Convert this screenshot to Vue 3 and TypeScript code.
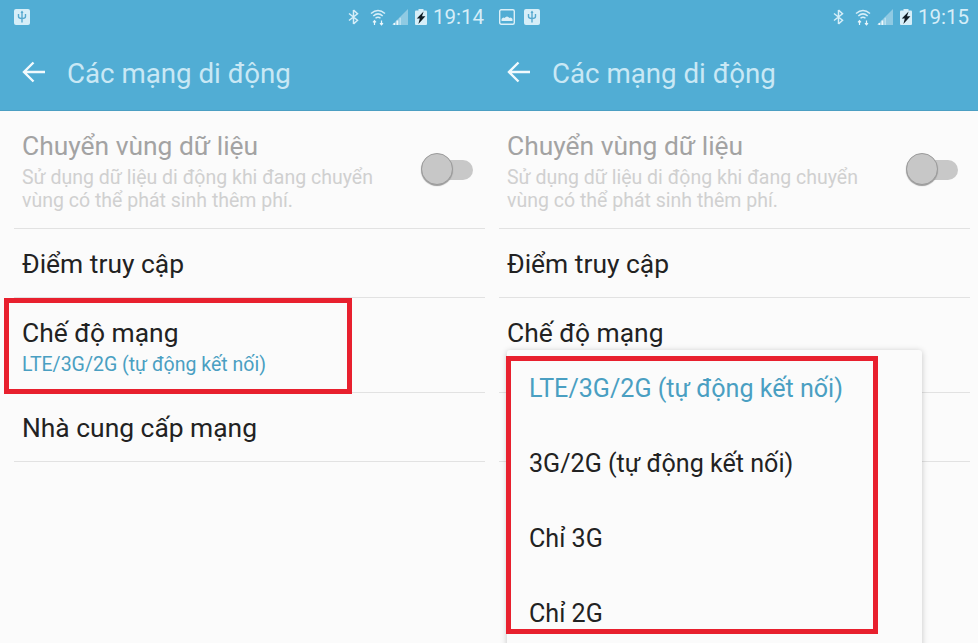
<script setup lang="ts">
interface Screen {
  time: string
  picture: boolean
  open: boolean
}

const screens: Screen[] = [
  { time: '19:14', picture: false, open: false },
  { time: '19:15', picture: true, open: true },
]

const options: string[] = ['LTE/3G/2G (tự động kết nối)', '3G/2G (tự động kết nối)', 'Chỉ 3G', 'Chỉ 2G']
</script>

<template>
  <div class="page">
    <section v-for="s in screens" :key="s.time" class="screen" :class="{ wide: s.open }">
      <header class="appbar">
        <div class="status">
          <svg v-if="s.picture" class="notif" viewBox="0 0 16 16">
            <rect x="0.7" y="0.7" width="14.6" height="14.6" rx="1.5" fill="#51add4" stroke="#dcf0f8" stroke-width="1.4" />
            <path d="M2.5 12 L2.5 10 Q4 7.5 5.5 9 Q8 6 10.5 9 Q12 7.5 13.5 10 L13.5 12 Z" fill="#dcf0f8" />
          </svg>
          <svg class="notif" viewBox="0 0 16 16">
            <rect width="16" height="16" rx="2" fill="#d6eef8" />
            <path d="M8 2.5 V13.5 M4.5 5 V7.5 Q4.5 9.5 8 9.5 Q11.5 9.5 11.5 7.5 V5" fill="none" stroke="#57a9cf" stroke-width="1.4" />
            <path d="M8 1.5 L9.5 4 H6.5 Z" fill="#57a9cf" />
          </svg>
          <span class="spacer"></span>
          <svg class="bt" viewBox="0 0 13 16">
            <path d="M6.5 1 V15 M6.5 1 L10.5 4.8 L2 11.5 M6.5 15 L10.5 11.2 L2 4.5" fill="none" stroke="#d6eef8" stroke-width="1.5" />
          </svg>
          <svg class="wifi" viewBox="0 0 16 18">
            <path d="M1 5.5 Q8 -0.5 15 5.5 M3.3 8 Q8 3.8 12.7 8 M5.5 10.3 Q8 8.2 10.5 10.3" fill="none" stroke="#d6eef8" stroke-width="1.5" />
            <path d="M4.5 17 V13 M3 14.3 L4.5 12.6 L6 14.3 M11.5 12.5 V16.5 M10 15.2 L11.5 16.9 L13 15.2" fill="none" stroke="#e9f6fb" stroke-width="1.2" />
          </svg>
          <svg class="signal" viewBox="0 0 16 16">
            <path d="M16 0 V16 H0 Z" fill="#8fcae3" />
            <path d="M1.5 16 V14 H3.2 V16 Z M4.5 16 V11.5 H6.3 V16 Z" fill="#eef8fc" />
            <path d="M7.5 16 V8.8 H9 V16 Z" fill="#b9dfef" />
          </svg>
          <svg class="battery" viewBox="0 0 12 16">
            <rect x="3.5" y="0" width="5" height="2" fill="#d6eef8" />
            <rect x="0" y="1.5" width="12" height="14.5" rx="1" fill="#d6eef8" />
            <path d="M8.6 2.6 L1.8 9.6 H4.8 L3.4 15 L10.4 7.2 H7 Z" fill="#0f1c24" />
          </svg>
          <span class="time">{{ s.time }}</span>
        </div>
        <div class="titlebar">
          <svg class="back" viewBox="0 0 24 22">
            <path d="M23 11 H2.5 M11.5 1.5 L2 11 L11.5 20.5" fill="none" stroke="#f2fafd" stroke-width="2.4" />
          </svg>
          <h1 class="heading">Các mạng di động</h1>
        </div>
      </header>

      <main class="list">
        <div class="row roaming">
          <div class="text">
            <div class="title disabled">Chuyển vùng dữ liệu</div>
            <div class="desc">Sử dụng dữ liệu di động khi đang chuyển<br />vùng có thể phát sinh thêm phí.</div>
          </div>
          <div class="toggle"><span class="thumb"></span></div>
        </div>
        <div class="row single"><div class="title">Điểm truy cập</div></div>
        <div class="row mode">
          <div class="title">Chế độ mạng</div>
          <div class="value">LTE/3G/2G (tự động kết nối)</div>
        </div>
        <div class="row single"><div class="title">Nhà cung cấp mạng</div></div>
      </main>

      <div v-if="s.open" class="menu">
        <div v-for="(o, i) in options" :key="o" class="option" :class="{ selected: i === 0 }">{{ o }}</div>
      </div>
      <div class="mark" :class="s.open ? 'mark-menu' : 'mark-row'"></div>
    </section>
  </div>
</template>

<style scoped>
.page {
  display: flex;
  width: 978px;
  height: 643px;
  overflow: hidden;
  background: #fbfbfb;
  font-family: Roboto, "Liberation Sans", sans-serif;
}
.screen {
  position: relative;
  flex: 0 0 485px;
  width: 485px;
  height: 643px;
}
.screen.wide {
  flex: 0 0 493px;
  width: 493px;
  padding-right: 8px;
  box-sizing: border-box;
}
.appbar {
  height: 111px;
  box-sizing: border-box;
  background: #51add4;
  border-bottom: 1px solid #4b9fc3;
}
.screen.wide .appbar {
  margin-right: -8px;
  padding-right: 8px;
}
.status {
  display: flex;
  align-items: center;
  height: 34px;
  padding-left: 14px;
}
.notif {
  width: 16px;
  height: 16px;
  margin-right: 9px;
}
.spacer {
  flex: 1;
}
.bt {
  width: 13px;
  height: 16px;
  margin-right: 10px;
}
.wifi {
  width: 16px;
  height: 18px;
  margin-right: 6px;
}
.signal {
  width: 16px;
  height: 16px;
  margin-right: 7px;
}
.battery {
  width: 12px;
  height: 16px;
  margin-right: 6px;
}
.time {
  font-size: 20.5px;
  line-height: 24px;
  color: #d6eef8;
  width: 52px;
  white-space: nowrap;
}
.titlebar {
  display: flex;
  align-items: center;
  height: 76px;
  padding-left: 22px;
}
.back {
  width: 24px;
  height: 22px;
  margin-right: 21px;
}
.heading {
  margin: 2px 0 0;
  font-size: 27.7px;
  font-weight: 400;
  color: #c9e8f5;
  white-space: nowrap;
}
.list {
  display: flex;
  flex-direction: column;
}
.row {
  box-sizing: border-box;
  margin-left: 14px;
  padding-left: 8px;
  border-bottom: 1px solid #e2e2e2;
}
.roaming {
  display: flex;
  justify-content: space-between;
  height: 118px;
  padding-top: 20px;
  padding-right: 12px;
}
.single {
  display: flex;
  align-items: center;
  height: 69px;
  padding-top: 2px;
}
.mode {
  height: 95px;
  padding-top: 20px;
}
.title {
  font-size: 26.4px;
  line-height: 30px;
  color: #222;
  white-space: nowrap;
}
.title.disabled {
  color: #a3a3a3;
}
.desc {
  margin-top: 5px;
  font-size: 19.5px;
  line-height: 23px;
  color: #d0d0d0;
  white-space: nowrap;
}
.value {
  margin-top: 4px;
  font-size: 19.5px;
  line-height: 26px;
  color: #4a9fc2;
  white-space: nowrap;
}
.toggle {
  position: relative;
  width: 52px;
  height: 20px;
  margin-top: 29px;
  border-radius: 10px;
  background: linear-gradient(to right, transparent 15px, #c8c8c8 15px);
}
.thumb {
  position: absolute;
  left: 0;
  top: -7px;
  width: 30px;
  height: 30px;
  border-radius: 50%;
  background: #c7c7c7;
  border: 1px solid #9b9b9b;
  box-shadow: 0 1px 1px #999;
}
.menu {
  position: absolute;
  left: 22px;
  top: 350px;
  width: 415px;
  height: 300px;
  background: #fbfbfb;
  border-radius: 3px;
  box-shadow: 0 1px 6px rgba(0, 0, 0, 0.22);
}
.option {
  display: flex;
  align-items: center;
  box-sizing: border-box;
  height: 75px;
  padding: 2px 0 0 22px;
  font-size: 25.1px;
  color: #222;
  white-space: nowrap;
}
.option.selected {
  color: #4a9fc2;
}
.mark {
  position: absolute;
  box-sizing: border-box;
  border: 5px solid #e8202e;
}
.mark-row {
  left: 4px;
  top: 298px;
  width: 348px;
  height: 96px;
}
.mark-menu {
  left: 21px;
  top: 356px;
  width: 372px;
  height: 278px;
}
</style>
